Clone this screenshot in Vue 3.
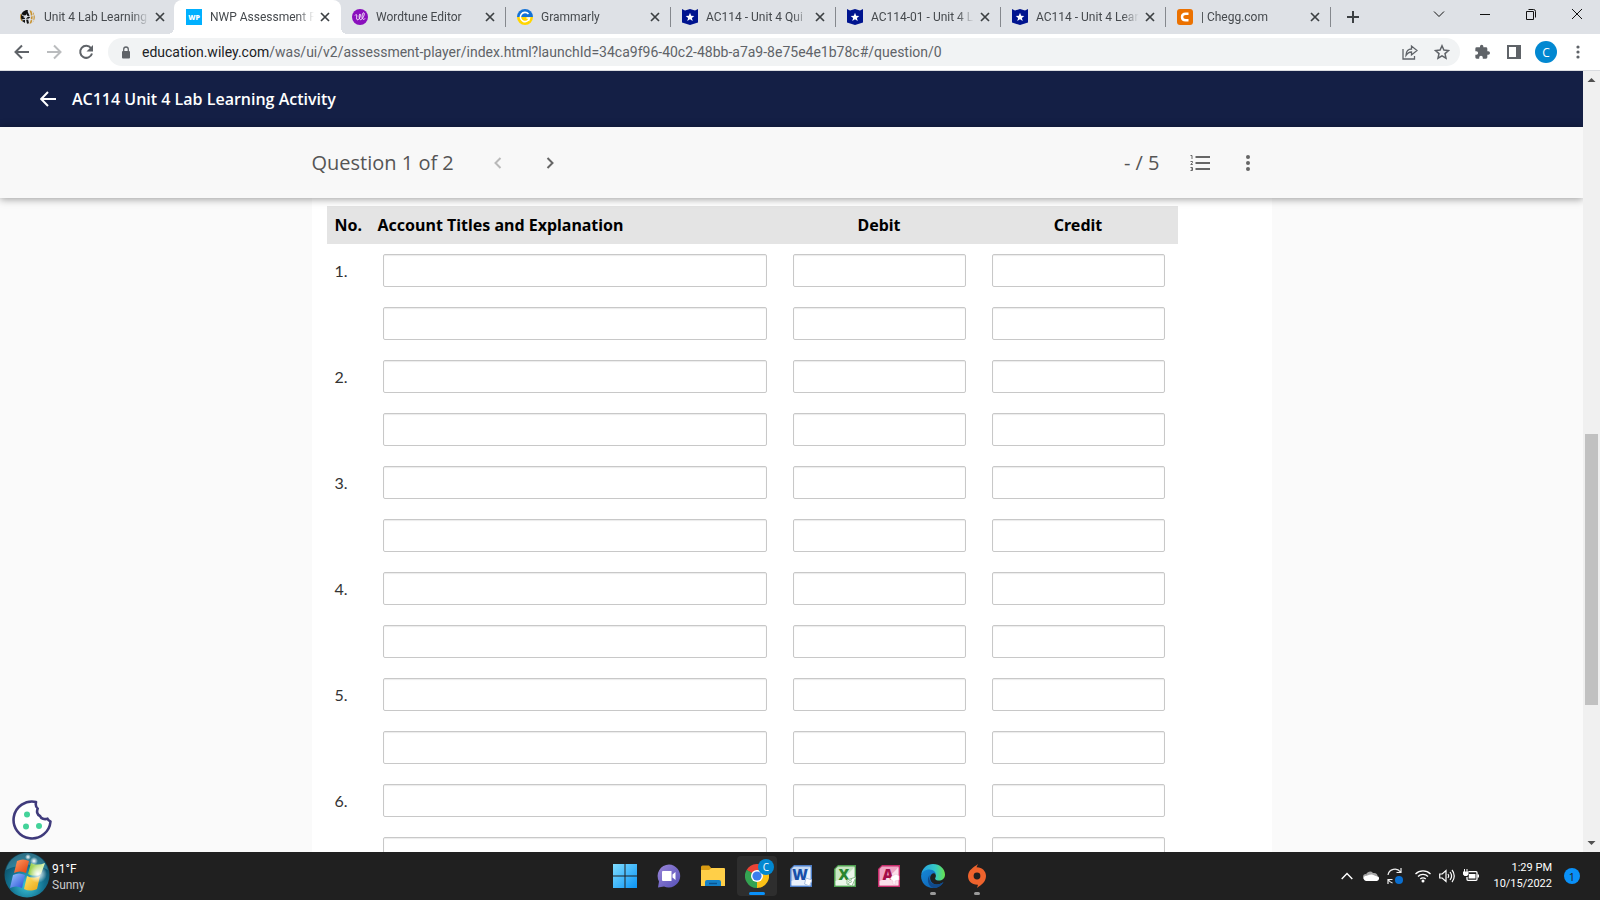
<template>
  <div class="desktop">
    <header class="browser">
      <div class="tab-strip">
        <div
          v-for="(tab, index) in tabs"
          :key="index"
          class="tab"
          :class="{ active: tab.active, divided: tab.divided }"
        >
          <svg class="favicon" viewBox="0 0 16 16" aria-hidden="true">
            <g v-if="tab.icon === 'globe'">
              <path d="M8 1a7 7 0 0 0-6 11l3 2V9L3 8l3-2z" fill="#111" />
              <path d="M6 1.500L9 8l-2 2 1 4.500" fill="none" stroke="#111" stroke-width="2" />
              <path d="M9.500 1.200c3 .5 5.300 3 5.300 6.800s-2.200 6-5.300 6.800c2-4.500 2-9 0-13.600z" fill="#c8922f" />
              <path d="M2 6c4 2 9 2 13-.5M2 11c4-1.500 9-1 12 .5M12 2c1.500 4 1.500 8 0 12" fill="none" stroke="#dee1e6" />
              <path d="M1 5c-.8 3-.5 5 1 7" fill="none" stroke="#c8922f" />
            </g>
            <g v-else-if="tab.icon === 'wp'">
              <rect width="16" height="16" fill="#00b0ff" />
              <text x="8" y="10.500" text-anchor="middle" font-size="7" font-weight="800" fill="#fff">WP</text>
            </g>
            <g v-else-if="tab.icon === 'wordtune'">
              <circle cx="8" cy="8" r="8" fill="#8a0fbd" />
              <path d="M3 6.500c1-1.500 2-1 1.800.5-.4 2.500-.3 4 1 3.800C8 10.300 9 5 8 5c-1.200 0-1.200 6 .7 5.600C11 10.300 13.200 4.500 11.800 3.800 10.200 3.300 9.200 9.500 11 10.200c1 .3 1.500 0 2-.7" fill="none" stroke="#fff" stroke-width=".9" />
            </g>
            <g v-else-if="tab.icon === 'grammarly'">
              <path d="M0 8a8 8 0 0 1 16 0z" fill="#1472d6" />
              <path d="M0 8a8 8 0 0 0 16 0z" fill="#ffd500" />
              <path d="M11.500 5A4.600 4.600 0 1 0 12.500 9H9.500M12.500 9l-1 3" fill="none" stroke="#fff" stroke-width="1.600" />
            </g>
            <g v-else-if="tab.icon === 'shield'">
              <path d="M0 0l3 1.500L8 0l5 1.500L16 0v13.500L8 16l-8-2.500z" fill="#00148f" />
              <path d="M8 3.800l1.200 2.900 3.100.2-2.400 2 .8 3L8 10.300l-2.700 1.600.8-3-2.400-2 3.100-.2z" fill="#fff" />
            </g>
            <g v-else>
              <rect width="16" height="16" rx="3" fill="#eb7100" />
              <path d="M11.500 4.700H8.700C6.300 4.700 5 6 5 8s1.300 3.300 3.700 3.300h2.800" fill="none" stroke="#fff" stroke-width="2.400" />
            </g>
          </svg>
          <span class="tab-title">{{ tab.title }}</span>
          <button class="tab-close" type="button" aria-label="Close tab">
            <svg width="10" height="10" viewBox="0 0 10 10"><path d="M1 1l8 8M9 1L1 9" stroke="#3c4043" stroke-width="1.700" /></svg>
          </button>
        </div>
        <button class="new-tab" type="button" aria-label="New tab">
          <svg width="12" height="12" viewBox="0 0 12 12"><path d="M6 0v12M0 6h12" stroke="#3c4043" stroke-width="2" /></svg>
        </button>
        <div class="window-controls">
          <button v-for="control in windowControls" :key="control.label" type="button" :aria-label="control.label">
            <svg width="12" height="12" viewBox="0 0 12 12"><path :d="control.path" fill="none" stroke="#111" /></svg>
          </button>
        </div>
      </div>

      <div class="toolbar">
        <button class="tool" type="button" aria-label="Back">
          <svg width="16" height="16" viewBox="0 0 16 16"><path d="M15 8H2M8 1.500L1.500 8 8 14.500" fill="none" stroke="#5f6368" stroke-width="2" /></svg>
        </button>
        <button class="tool" type="button" aria-label="Forward" disabled>
          <svg width="16" height="16" viewBox="0 0 16 16"><path d="M1 8h13M8 1.500L14.500 8 8 14.500" fill="none" stroke="#babcbe" stroke-width="2" /></svg>
        </button>
        <button class="tool" type="button" aria-label="Reload">
          <svg width="16" height="16" viewBox="0 0 16 16">
            <path d="M13 4.200A6 6 0 1 0 14 9.500" fill="none" stroke="#5f6368" stroke-width="2" />
            <path d="M15 1v6.500H8.500z" fill="#5f6368" />
          </svg>
        </button>
        <div class="omnibox">
          <svg width="10" height="13" viewBox="0 0 10 13" aria-hidden="true">
            <rect x="1" y="5" width="8" height="7.500" rx="1" fill="#5f6368" />
            <path d="M2.700 5.500V3.300a2.300 2.300 0 0 1 4.600 0v2.200" fill="none" stroke="#5f6368" stroke-width="1.300" />
          </svg>
          <div class="url">education.wiley.com<span>/was/ui/v2/assessment-player/index.html?launchId=34ca9f96-40c2-48bb-a7a9-8e75e4e1b78c#/question/0</span></div>
          <button class="tool" type="button" aria-label="Share">
            <svg width="16" height="16" viewBox="0 0 16 16"><path d="M1 5v10h11.500v-3M4 11.500C4 7 6.500 5 9.500 5V2L15 6.500 9.500 11V8C7 8 5.500 9 4 11.500z" fill="none" stroke="#5f6368" stroke-width="1.300" /></svg>
          </button>
          <button class="tool" type="button" aria-label="Bookmark">
            <svg width="16" height="16" viewBox="0 0 16 16"><path d="M8 1.800l1.900 4.300 4.600.4L11 9.600l1 4.600-4-2.400-4 2.400 1-4.600-3.500-3.100 4.600-.4z" fill="none" stroke="#5f6368" stroke-width="1.500" /></svg>
          </button>
        </div>
        <div class="tool-group">
          <button class="tool" type="button" aria-label="Extensions">
            <svg width="16" height="16" viewBox="0 0 24 24"><path d="M21.500 11H20V7a2 2 0 0 0-2-2h-4V3.500a2.500 2.500 0 0 0-5 0V5H4a2 2 0 0 0-2 2v3.800h1.500a2.700 2.700 0 0 1 0 5.400H2V20a2 2 0 0 0 2 2h3.800v-1.500a2.700 2.700 0 0 1 5.400 0V22H18a2 2 0 0 0 2-2v-4h1.500a2.500 2.500 0 0 0 0-5z" fill="#5f6368" /></svg>
          </button>
          <button class="tool" type="button" aria-label="Side panel">
            <svg width="14" height="14" viewBox="0 0 14 14"><path d="M0 0h14v14H0zM2 2v10h7V2z" fill="#5f6368" fill-rule="evenodd" /></svg>
          </button>
          <button class="avatar" type="button">C</button>
          <button class="tool" type="button" aria-label="Menu">
            <svg width="4" height="14" viewBox="0 0 4 14" fill="#5f6368"><circle cx="2" cy="2" r="1.600" /><circle cx="2" cy="7" r="1.600" /><circle cx="2" cy="12" r="1.600" /></svg>
          </button>
        </div>
      </div>
    </header>

    <div class="viewport">
      <main class="page">
        <div class="course-bar">
          <a href="#" aria-label="Back to course">
            <svg width="16" height="16" viewBox="0 0 16 16"><path d="M16 8H1.500M8 1L1.200 8 8 15" fill="none" stroke="#fff" stroke-width="2" /></svg>
          </a>
          <h1>AC114 Unit 4 Lab Learning Activity</h1>
        </div>

        <div class="question-bar">
          <div class="question-inner">
            <h2>Question 1 of 2</h2>
            <div class="pager">
              <button type="button" aria-label="Previous question" disabled>
                <svg width="8" height="12" viewBox="0 0 8 12"><path d="M6.500 1L1.500 6l5 5" fill="none" stroke="#b9b9b9" stroke-width="2" /></svg>
              </button>
              <button type="button" aria-label="Next question">
                <svg width="8" height="12" viewBox="0 0 8 12"><path d="M1.500 1l5 5-5 5" fill="none" stroke="#666" stroke-width="2" /></svg>
              </button>
            </div>
            <div class="score">- / 5</div>
            <button class="list-button" type="button" aria-label="Question list">
              <svg width="20" height="16" viewBox="0 0 20 16">
                <path d="M5.500 2H20M5.500 8H20M5.500 14H20" stroke="#666" stroke-width="2" />
                <path d="M.5.500H2V4M.5 6.500h2v1L.8 9.500h2M.5 12.500h2v3h-2M1 14h1.500" fill="none" stroke="#666" />
              </svg>
            </button>
            <button type="button" aria-label="More options">
              <svg width="4" height="16" viewBox="0 0 4 16" fill="#666"><circle cx="2" cy="2" r="2" /><circle cx="2" cy="8" r="2" /><circle cx="2" cy="14" r="2" /></svg>
            </button>
          </div>
        </div>

        <div class="question-body">
          <table class="journal">
            <colgroup>
              <col class="col-no" />
              <col class="col-account" />
              <col class="col-amount" />
              <col class="col-amount" />
            </colgroup>
            <thead>
              <tr>
                <th>No.</th>
                <th>Account Titles and Explanation</th>
                <th class="amount">Debit</th>
                <th class="amount">Credit</th>
              </tr>
            </thead>
            <tbody>
              <tr v-for="line in lines" :key="line.id">
                <td class="number">{{ line.number }}</td>
                <td><input v-model="line.account" type="text" :aria-label="`Account title, line ${line.id}`" /></td>
                <td><input v-model="line.debit" type="text" :aria-label="`Debit, line ${line.id}`" /></td>
                <td><input v-model="line.credit" type="text" :aria-label="`Credit, line ${line.id}`" /></td>
              </tr>
            </tbody>
          </table>
        </div>

        <button class="cookie" type="button" aria-label="Cookie preferences">
          <svg width="40" height="40" viewBox="0 0 40 40">
            <path d="M24 1.900A18.500 18.500 0 1 0 38.500 21.500c-1.500-.5-2.300-1.300-3-2.800-3 1-6.500 0-7.500-2.700-3-1.200-3.500-4.500-2.300-7.500C24 7.500 23.500 4.500 24 1.900z" fill="#fff" stroke="#403b7c" stroke-width="2.600" stroke-linejoin="round" />
            <g fill="#44d39a"><circle cx="15" cy="14.500" r="3" /><circle cx="14" cy="26.500" r="3" /><circle cx="27" cy="26" r="3" /></g>
          </svg>
        </button>
      </main>

      <div class="scrollbar" aria-hidden="true">
        <svg width="17" height="17" viewBox="0 0 17 17"><path d="M4.500 11l4-4 4 4z" fill="#505050" /></svg>
        <svg width="17" height="17" viewBox="0 0 17 17"><path d="M4.500 6l4 4 4-4z" fill="#505050" /></svg>
        <div class="thumb" :style="{ top: scroll.offset + '%', height: scroll.size + '%' }"></div>
      </div>
    </div>

    <footer class="taskbar">
      <button class="weather" type="button">
        <svg width="46" height="46" viewBox="0 0 46 46" aria-hidden="true">
          <defs>
            <radialGradient id="orb" cx=".5" cy=".72" r=".7">
              <stop offset="0" stop-color="#3cc8dc" />
              <stop offset=".55" stop-color="#12708f" />
              <stop offset="1" stop-color="#0b4258" />
            </radialGradient>
            <linearGradient id="red" y2="1"><stop stop-color="#ff9c62" /><stop offset="1" stop-color="#df3d0c" /></linearGradient>
            <linearGradient id="green" x2="1"><stop stop-color="#8fca3e" /><stop offset="1" stop-color="#e0f6b8" /></linearGradient>
            <linearGradient id="blue" y2="1"><stop stop-color="#9cc5ff" /><stop offset="1" stop-color="#2850d8" /></linearGradient>
            <linearGradient id="yellow" y2="1"><stop stop-color="#ffe56a" /><stop offset="1" stop-color="#eaa514" /></linearGradient>
            <radialGradient id="glow"><stop stop-color="#fff" /><stop offset="1" stop-color="#fff" stop-opacity="0" /></radialGradient>
          </defs>
          <circle cx="23" cy="23" r="22.500" fill="url(#orb)" />
          <path d="M2 18C5 6 15 1 23 1s18 5 21 17C32 10 14 12 2 18z" fill="#7ed7ea" opacity=".3" />
          <path d="M13 9c4-2 8-2 12 0l-3 12c-4-2-8-2-12 0z" fill="url(#red)" />
          <path d="M27 11c4 2 9 2 14 0l-4 11c-4 2-9 2-13 0z" fill="url(#green)" />
          <path d="M9 23c4-2 8-2 12 0l-3 13c-4-2-8-2-12 0z" fill="url(#blue)" />
          <path d="M23 24c4 2 8 2 13 0l-3 13c-5 2-9 2-13 0z" fill="url(#yellow)" />
          <circle cx="34" cy="22" r="9" fill="url(#glow)" />
          <circle cx="24" cy="5" r="3" fill="url(#glow)" />
          <circle cx="30" cy="9" r="4" fill="url(#glow)" />
        </svg>
        <span class="weather-text">
          <strong>91°F</strong>
          <span>Sunny</span>
        </span>
      </button>

      <nav class="apps">
        <button type="button" aria-label="Start">
          <svg width="24" height="24" viewBox="0 0 24 24">
            <defs><linearGradient id="start" x2="1" y2="1"><stop stop-color="#7fdcff" /><stop offset="1" stop-color="#0a94f5" /></linearGradient></defs>
            <path d="M0 0h11.500v11.500H0zM12.500 0H24v11.500H12.500zM0 12.500h11.500V24H0zM12.500 12.500H24V24H12.500z" fill="url(#start)" />
          </svg>
        </button>
        <button type="button" aria-label="Chat">
          <svg width="24" height="24" viewBox="0 0 24 24">
            <defs><linearGradient id="chat" x2="1" y2="1"><stop stop-color="#9a86d8" /><stop offset="1" stop-color="#5550b8" /></linearGradient></defs>
            <path d="M12 .500a11.500 11.500 0 1 1-5 22L1 23.500l1-6A11.500 11.500 0 0 1 12 .5z" fill="url(#chat)" />
            <path d="M6 7h8.500v10H6a1 1 0 0 1-1-1V8a1 1 0 0 1 1-1zM15.500 10.500L18.500 8v8l-3-2.500z" fill="#fff" />
          </svg>
        </button>
        <button type="button" aria-label="File Explorer">
          <svg width="24" height="24" viewBox="0 0 24 24">
            <path d="M0 3a1.500 1.500 0 0 1 1.500-1.500H8L11 5h-1L8 8H0z" fill="#d99b12" />
            <path d="M0 6h8l2.500-2H23a1 1 0 0 1 1 1v17H0z" fill="#ffcf48" />
            <path d="M4 22v-4a2 2 0 0 1 2-2h12a2 2 0 0 1 2 2v4z" fill="#1481c8" />
            <path d="M8 19.500h8" stroke="#0a5490" stroke-width="1.500" />
          </svg>
        </button>
        <button class="running current" type="button" aria-label="Chrome">
          <svg width="24" height="24" viewBox="0 0 24 24">
            <path d="M12 12L1.600 6A12 12 0 0 1 22.400 6z" fill="#ea4335" />
            <path d="M12 12L22.400 6A12 12 0 0 1 12 24z" fill="#fbc116" />
            <path d="M12 12v12A12 12 0 0 1 1.600 6z" fill="#34a352" />
            <path d="M12 6h10.400L12 12zM17.200 15L12 24V12z" fill="#fbc116" />
            <path d="M1.600 6l5.200 9 5.200 3V12z" fill="#34a352" />
            <circle cx="12" cy="12" r="6" fill="#fff" />
            <circle cx="12" cy="12" r="4.600" fill="#3b7ded" />
          </svg>
          <span class="profile-badge">C</span>
        </button>
        <button v-for="app in officeApps" :key="app.name" type="button" :aria-label="app.name">
          <svg width="22" height="22" viewBox="0 0 22 22">
            <path d="M4 0h18v22H0V4z" :fill="app.edge" />
            <path d="M4 1.500h16.500v19h-19V4z" :fill="app.light" />
            <path d="M1.500 16C8 14 15 9 20.500 2v18.500h-19z" fill="#fff" opacity=".65" />
            <text x="10" y="15" text-anchor="middle" font-size="15" font-weight="800" :fill="app.color">{{ app.letter }}</text>
            <path v-if="app.letter === 'W'" d="M16 13l6 2-2.500 6-5-2z" fill="#fff" stroke="#a9bfe2" />
            <path v-else-if="app.letter === 'X'" d="M13 15l9-3-4 9-5-2zM14 16.500l4-2M14 18.500l4-2" fill="#fff" stroke="#8dbd8d" />
            <path v-else d="M14 11l4-2 3 2v4l-4 1v4l-2-1v-3l-3-2z" fill="#fff" stroke="#efb5ce" stroke-width=".5" />
          </svg>
        </button>
        <button class="running" type="button" aria-label="Edge">
          <svg width="24" height="24" viewBox="0 0 24 24">
            <defs>
              <linearGradient id="edge-top" x2="1"><stop stop-color="#259fe2" /><stop offset=".6" stop-color="#35c9c5" /><stop offset="1" stop-color="#68e34b" /></linearGradient>
              <linearGradient id="edge-low" y2="1"><stop stop-color="#1688d8" /><stop offset="1" stop-color="#0c5cae" /></linearGradient>
            </defs>
            <path d="M.3 10C1.500 4 6 0 12 0c7 0 12 5 12 10.500 0 4-3 6-6 6-3.500 0-4.500-1.500-3.500-3C16 11 13.500 7.500 9.500 7.500 5 7.500 1.500 9 .3 10z" fill="url(#edge-top)" />
            <path d="M.1 12C.3 8 4 5.500 8.500 5.500c4 0 6.500 3 6.500 5-1-1.500-3-1.700-4.200-.5C7 13.500 10 21 16 20.500c2.500 0 4.500-1 6.500-2.500C20 22 16.500 24 12 24 5 24 0 18.500.1 12z" fill="url(#edge-low)" />
            <path d="M9 11c-2 3 0 9 6 9.500 3 .3 5-.8 7.500-2.500-2 4-6 6-10 6C7 23 5 14 9 11z" fill="#114a8b" />
          </svg>
        </button>
        <button class="running" type="button" aria-label="Origin">
          <svg width="18" height="24" viewBox="0 0 18 24">
            <path d="M10 0L8.500 3.200C14 3 18 7 18 12c0 6-5 9-9 12l1-3.300C4 21 0 17 0 12 0 6 6 3 10 0z" fill="#ee632d" />
            <circle cx="9" cy="12" r="3.400" fill="#202020" />
          </svg>
        </button>
      </nav>

      <div class="tray">
        <button type="button" aria-label="Show hidden icons">
          <svg width="12" height="8" viewBox="0 0 12 8"><path d="M.7 7L6 1.500 11.300 7" fill="none" stroke="#fff" stroke-width="1.400" /></svg>
        </button>
        <svg width="16" height="16" viewBox="0 0 16 16" aria-hidden="true">
          <path d="M3 8a4 4 0 0 1 7-3c3-.5 4.500 1 4.700 3.500L9 12H3a3 3 0 0 1 0-6z" fill="#a6a6a6" />
          <path d="M3 13a2.700 2.700 0 0 1-1-5c3 0 4-2 7-1.500 2 .4 4 2 6 2a2.500 2.500 0 0 1-1 4.500z" fill="#fff" />
        </svg>
        <svg width="16" height="16" viewBox="0 0 16 16" aria-hidden="true">
          <path d="M1 7a7 7 0 0 1 12.500-3M14 0v4.500H9.500M1 16v-4.500h4.500M1.500 12a7 7 0 0 0 4 3" fill="none" stroke="#eee" stroke-width="1.200" />
          <circle cx="12" cy="12" r="4" fill="#0a6fd0" />
        </svg>
        <svg class="wifi" width="16" height="14" viewBox="0 0 16 14" aria-hidden="true">
          <path d="M.5 5a10.600 10.600 0 0 1 15 0M3 7.500a7 7 0 0 1 10 0M5.300 10a3.800 3.800 0 0 1 5.400 0" fill="none" stroke="#fff" stroke-width="1.300" />
          <circle cx="8" cy="12" r="1.500" fill="#fff" />
        </svg>
        <svg width="16" height="14" viewBox="0 0 16 14" aria-hidden="true">
          <path d="M.7 5v4h2.500L7 12.500v-11L3.200 5zM9 5c1 1.300 1 2.700 0 4M11 3c2 2.500 2 5.500 0 8M13 1c3 3.500 3 8.500 0 12" fill="none" stroke="#fff" stroke-width="1.200" />
        </svg>
        <svg width="16" height="14" viewBox="0 0 16 14" aria-hidden="true">
          <path d="M5.500 2.700H13q1 0 1 1v6.600q0 1-1 1H5q-1 0-1-1V8" fill="none" stroke="#fff" stroke-width="1.300" />
          <path d="M6 5h6.500v4.500H5.500zM14.500 5.500H16v3h-1.500zM0 2.500h5.500v3L4 7H1.500L0 5.500zM1 0h1v3H1zM3.500 0h1v3h-1z" fill="#fff" />
        </svg>
        <div class="clock">
          <span>1:29 PM</span>
          <span>10/15/2022</span>
        </div>
        <button class="notifications" type="button">1</button>
      </div>
    </footer>
  </div>
</template>

<script setup>
import { ref } from 'vue';

const tabs = [
  { title: 'Unit 4 Lab Learning', icon: 'globe' },
  { title: 'NWP Assessment P', icon: 'wp', active: true },
  { title: 'Wordtune Editor', icon: 'wordtune', divided: true },
  { title: 'Grammarly', icon: 'grammarly', divided: true },
  { title: 'AC114 - Unit 4 Qui', icon: 'shield', divided: true },
  { title: 'AC114-01 - Unit 4 L', icon: 'shield', divided: true },
  { title: 'AC114 - Unit 4 Lear', icon: 'shield', divided: true },
  { title: '| Chegg.com', icon: 'chegg', divided: true }
];

const windowControls = [
  { label: 'Search tabs', path: 'M1 3.500l5 5 5-5' },
  { label: 'Minimize', path: 'M1 6.500h10' },
  { label: 'Restore', path: 'M1.500 3.500h7v8h-7zM3.500 1.500h5q2 0 2 2v6' },
  { label: 'Close', path: 'M1 1l10 10M11 1L1 11' }
];

const officeApps = [
  { name: 'Word', letter: 'W', color: '#174fa8', light: '#c4d8f3', edge: '#4d7ec8' },
  { name: 'Excel', letter: 'X', color: '#2b862f', light: '#c8e6c3', edge: '#4e9e50' },
  { name: 'Access', letter: 'A', color: '#a30d48', light: '#efa5c4', edge: '#c52c6b' }
];

// two lines per journal entry, only the first one is numbered
const lines = ref(
  Array.from({ length: 12 }, (_, i) => ({
    id: i + 1,
    number: i % 2 === 0 ? `${i / 2 + 1}.` : '',
    account: '',
    debit: '',
    credit: ''
  }))
);

const scroll = { offset: 46.5, size: 34.7 };
</script>

<style>
body {
  margin: 0;
}
</style>

<style scoped>
.desktop {
  display: flex;
  flex-direction: column;
  height: 100vh;
  overflow: hidden;
  font-family: "Open Sans", "Noto Sans", sans-serif;
  font-size: 12px;
  background: #fafafa;
}

.desktop * {
  box-sizing: border-box;
}

button {
  display: flex;
  align-items: center;
  justify-content: center;
  flex-shrink: 0;
  padding: 0;
  border: 0;
  background: none;
  color: inherit;
  font: inherit;
}

svg {
  display: block;
  flex-shrink: 0;
}

/* browser */
.tab-strip {
  display: flex;
  height: 34px;
  padding-left: 10px;
  background: #dee1e6;
}

.tab {
  position: relative;
  display: flex;
  align-items: center;
  flex: 0 1 165px;
  min-width: 0;
  padding: 0 10px;
  color: #45494d;
}

.tab.active {
  flex-basis: 167px;
  margin: 0 -1px;
  padding: 0 11px 0 12px;
  border-radius: 8px 8px 0 0;
  background: #fff;
}

.tab.active::before,
.tab.active::after {
  content: "";
  position: absolute;
  bottom: 0;
  width: 6px;
  height: 6px;
}

.tab.active::before {
  right: 100%;
  background: radial-gradient(circle at top left, #dee1e6 6px, #fff 6px);
}

.tab.active::after {
  left: 100%;
  background: radial-gradient(circle at top right, #dee1e6 6px, #fff 6px);
}

.tab.divided {
  padding-left: 12px;
}

.tab.divided::after {
  content: "";
  position: absolute;
  top: 7px;
  right: -1px;
  width: 1px;
  height: 20px;
  background: #85888d;
}

.favicon {
  width: 16px;
  height: 16px;
  margin-right: 8px;
}

.tab-title {
  flex: 1;
  overflow: hidden;
  white-space: nowrap;
  font-family: Roboto, sans-serif;
  mask-image: linear-gradient(to right, #000 84%, transparent);
}

.tab-close {
  width: 10px;
  margin-left: 6px;
}

.new-tab {
  width: 46px;
}

.window-controls {
  display: flex;
  height: 28px;
  margin-left: auto;
}

.window-controls button {
  width: 46px;
}

.toolbar {
  display: flex;
  align-items: center;
  gap: 8px;
  height: 37px;
  padding: 0 10px;
  border-bottom: 1px solid #dadce0;
  background: #fff;
}

.tool {
  width: 24px;
  height: 24px;
}

.omnibox {
  display: flex;
  align-items: center;
  flex: 1;
  gap: 8px;
  height: 28px;
  margin: 0 2px;
  padding: 0 6px 0 13px;
  border-radius: 14px;
  background: #f1f3f4;
}

.url {
  flex: 1;
  margin-left: 3px;
  overflow: hidden;
  white-space: nowrap;
  font-family: Roboto, sans-serif;
  font-size: 14px;
  color: #202124;
}

.url span {
  color: #5f6368;
}

.tool-group {
  display: flex;
  align-items: center;
  gap: 8px;
}

.avatar {
  width: 22px;
  height: 22px;
  margin: 0 1px;
  border-radius: 50%;
  background: #0288d1;
  color: #fff;
}

/* page */
.viewport {
  display: flex;
  flex: 1;
  min-height: 0;
}

.page {
  position: relative;
  display: flex;
  flex-direction: column;
  flex: 1;
  min-width: 0;
  overflow: hidden;
}

.course-bar {
  display: flex;
  align-items: center;
  flex-shrink: 0;
  gap: 16px;
  height: 56px;
  padding: 0 40px;
  background: #141f45;
  color: #fff;
}

h1,
h2 {
  margin: 0;
}

h1 {
  font-size: 16px;
  font-weight: 600;
}

.question-bar {
  position: relative;
  flex-shrink: 0;
  background: #f8f8f8;
  box-shadow: 0 1px 8px rgba(0, 0, 0, 0.4);
}

.question-inner {
  display: flex;
  align-items: center;
  height: 71px;
  max-width: 960px;
  margin: 0 auto;
  padding-right: 12px;
  font-size: 20px;
  color: #555;
}

.question-inner button {
  width: 24px;
  height: 24px;
}

h2 {
  font-size: 20px;
  font-weight: 400;
}

.pager {
  display: flex;
  gap: 28px;
  margin-left: 32px;
}

.score {
  margin-left: auto;
}

.question-inner .list-button {
  margin: 0 24px 0 28px;
}

.question-body {
  flex: 1;
  width: 100%;
  max-width: 960px;
  min-height: 0;
  margin: 0 auto;
  padding: 8px 94px 0 15px;
  background: #fff;
}

.journal {
  width: 100%;
  table-layout: fixed;
  border-collapse: collapse;
}

.col-no {
  width: 43px;
}

.col-amount {
  width: 199px;
}

.journal th {
  height: 38px;
  padding: 0 0 0 8px;
  background: #e4e4e4;
  color: #000;
  text-align: left;
  font-family: "Noto Sans", sans-serif;
  font-size: 16px;
  font-weight: 700;
  white-space: nowrap;
}

.journal th.amount {
  padding: 0;
  text-align: center;
}

.journal td {
  height: 53px;
  padding: 10px 13px;
}

.journal td.number {
  padding: 0 0 0 8px;
  color: #333;
  font-family: Lato, sans-serif;
  font-size: 16px;
}

.journal input {
  display: block;
  width: 100%;
  height: 33px;
  padding: 4px 8px;
  border: 1px solid #c8c8c8;
  border-radius: 2px;
  background: #fff;
  box-shadow: inset 0 1px 1px rgba(0, 0, 0, 0.08);
  font: inherit;
}

.cookie {
  position: absolute;
  bottom: 12px;
  left: 12px;
}

.scrollbar {
  position: relative;
  display: flex;
  flex-direction: column;
  justify-content: space-between;
  width: 17px;
  background: #f0f0f0;
}

.thumb {
  position: absolute;
  left: 2px;
  width: 13px;
  background: #c1c1c1;
}

/* taskbar */
.taskbar {
  display: grid;
  grid-template-columns: 1fr auto 1fr;
  align-items: center;
  flex-shrink: 0;
  height: 48px;
  background: #202020;
  color: #fff;
}

.weather {
  justify-self: start;
  gap: 2px;
  padding: 0 0 2px 4px;
  text-align: left;
}

.weather-text,
.clock {
  display: flex;
  flex-direction: column;
  font-family: Roboto, sans-serif;
  line-height: 16px;
}

.weather-text {
  padding-top: 4px;
  color: #ccc;
}

.weather-text strong {
  color: #fff;
  font-weight: 400;
}

.apps {
  display: flex;
  gap: 4px;
  padding-left: 2px;
}

.apps button {
  position: relative;
  width: 40px;
  height: 40px;
  border-radius: 4px;
}

.apps .running::after {
  content: "";
  position: absolute;
  bottom: 1px;
  left: 17px;
  width: 6px;
  height: 3px;
  border-radius: 2px;
  background: #9a9a9a;
}

.apps .current {
  background: #2e2e2e;
}

.apps .current::after {
  left: 12px;
  width: 16px;
  background: #0a91f9;
}

.profile-badge {
  position: absolute;
  top: 3px;
  right: 3px;
  width: 16px;
  height: 16px;
  border-radius: 50%;
  background: #0288d1;
  font-size: 10px;
  line-height: 16px;
}

.tray {
  display: flex;
  align-items: center;
  justify-self: end;
  gap: 8px;
  padding-right: 20px;
}

.tray button {
  margin-right: 2px;
}

.wifi {
  margin-left: 4px;
}

.clock {
  margin-left: 6px;
  font-size: 11px;
  text-align: right;
}

.tray .notifications {
  width: 16px;
  height: 16px;
  margin: 0 0 0 4px;
  border-radius: 50%;
  background: #0a91f9;
  color: #202020;
  font-size: 11px;
}
</style>
